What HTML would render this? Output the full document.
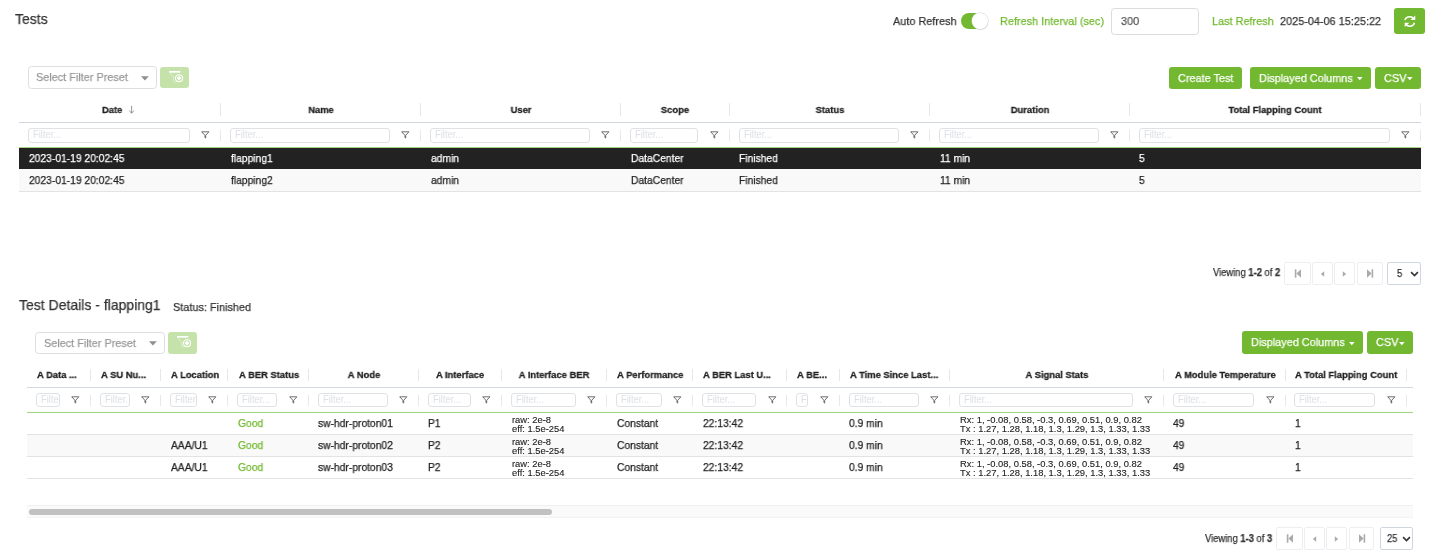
<!DOCTYPE html>
<html><head><meta charset="utf-8"><title>Tests</title>
<style>
html,body{margin:0;padding:0;background:#fff;}
body{width:1440px;height:559px;position:relative;overflow:hidden;font-family:"Liberation Sans",sans-serif;}
.t{position:absolute;white-space:nowrap;-webkit-text-stroke:0.25px currentColor;will-change:transform;}
.b{position:absolute;}
.fi{will-change:transform;border:1px solid #dfe1e4;border-radius:3px;box-sizing:border-box;background:#fff;overflow:hidden;color:#dde1e6;}
b{font-weight:bold;}
</style></head><body>
<div class="t" style="left:15.00px;top:11.63px;font-size:14.973px;line-height:14.973px;color:#333;font-weight:normal;transform:scaleX(0.935);transform-origin:0 0;">Tests</div>
<div class="t" style="left:893.00px;top:15.33px;font-size:11.658px;line-height:11.658px;color:#333;font-weight:normal;transform:scaleX(0.935);transform-origin:0 0;">Auto Refresh</div>
<div class="b" style="left:961.30px;top:12.60px;width:26.30px;height:16.60px;background:#72b830;border-radius:9px;"></div>
<div class="b" style="left:971.90px;top:12.80px;width:15.70px;height:16.40px;background:#fff;border-radius:50%;box-shadow:0 0 0 0.5px #d5d8d2, 0.3px 0.8px 1px rgba(0,0,0,.18);"></div>
<div class="t" style="left:1000.30px;top:15.33px;font-size:11.658px;line-height:11.658px;color:#72b830;font-weight:normal;transform:scaleX(0.935);transform-origin:0 0;">Refresh Interval (sec)</div>
<div class="b" style="left:1111.30px;top:8.20px;width:87.40px;height:26.40px;border:1.2px solid #dcdcdc;border-radius:3.5px;box-sizing:border-box;background:#fff;"></div>
<div class="t" style="left:1121.00px;top:15.43px;font-size:11.658px;line-height:11.658px;color:#555;font-weight:normal;transform:scaleX(0.935);transform-origin:0 0;">300</div>
<div class="t" style="left:1211.50px;top:15.33px;font-size:11.658px;line-height:11.658px;color:#72b830;font-weight:normal;transform:scaleX(0.935);transform-origin:0 0;">Last Refresh</div>
<div class="t" style="left:1280.00px;top:15.33px;font-size:11.658px;line-height:11.658px;color:#333;font-weight:normal;transform:scaleX(0.935);transform-origin:0 0;">2025-04-06 15:25:22</div>
<div class="b" style="left:1393.80px;top:8.00px;width:31.30px;height:26.20px;background:#72b830;border-radius:3px;"></div>
<svg class="b" style="left:1403.5px;top:14.6px" width="13" height="13" viewBox="0 0 13 13">
<path d="M0.9 5.1 C1.6 2.6 3.8 1.8 6 1.8 C7.6 1.8 8.8 2.5 9.6 3.7" fill="none" stroke="#fff" stroke-width="1.6"/>
<path d="M11.3 0.6 V5.1 H6.5 Z" fill="#fff"/>
<path d="M10.4 7.7 C9.7 10.2 7.6 11.2 5.6 11.2 C4.0 11.2 2.8 10.5 2.0 9.3" fill="none" stroke="#fff" stroke-width="1.6"/>
<path d="M0.7 12.1 V7.7 H5.4 Z" fill="#fff"/>
</svg>
<div class="b" style="left:27.50px;top:66.30px;width:129.10px;height:23.20px;border:1.2px solid #dedede;border-radius:3.5px;box-sizing:border-box;background:#fff;"></div>
<div class="t" style="left:36.30px;top:71.43px;font-size:11.658px;line-height:11.658px;color:#999;font-weight:normal;transform:scaleX(0.935);transform-origin:0 0;">Select Filter Preset</div>
<svg class="b" style="left:140.80px;top:76.00px" width="10" height="6" viewBox="0 0 10 6"><path d="M0 0.3 H7.8 L3.9 4.6 Z" fill="#8f8f8f"/></svg>
<div class="b" style="left:160.00px;top:66.80px;width:28.80px;height:21.70px;background:#c4e2a9;border-radius:3px;"></div>
<svg class="b" style="left:168.80px;top:71.30px" width="14" height="14" viewBox="0 0 14 14">
<rect x="0" y="0" width="11.3" height="1.7" fill="#fff"/>
<path d="M1.2 2.3 L4.6 6.6 V9.6 Q4.6 11.3 6.6 11.3" fill="none" stroke="#fff" stroke-width="1" opacity="0.45"/>
<circle cx="10" cy="7.2" r="3.5" fill="none" stroke="#fff" stroke-width="1.1"/>
<path d="M10 5.2 V9.2 M8.0 7.2 H12.0" stroke="#fff" stroke-width="1.7"/>
</svg>
<div class="b" style="left:1168.70px;top:66.80px;width:73.30px;height:21.80px;background:#72b830;border-radius:3px;"></div>
<div class="t" style="left:1177.90px;top:71.53px;font-size:11.658px;line-height:11.658px;color:#fff;font-weight:normal;transform:scaleX(0.935);transform-origin:0 0;">Create Test</div>
<div class="b" style="left:1250.00px;top:66.80px;width:121.00px;height:21.80px;background:#72b830;border-radius:3px;"></div>
<div class="t" style="left:1259.20px;top:71.53px;font-size:11.658px;line-height:11.658px;color:#fff;font-weight:normal;transform:scaleX(0.935);transform-origin:0 0;">Displayed Columns</div>
<svg class="b" style="left:1356.50px;top:76.90px" width="7" height="5" viewBox="0 0 7 5"><path d="M0 0 H5.6 L2.8 3.3 Z" fill="#fff"/></svg>
<div class="b" style="left:1374.90px;top:66.80px;width:46.10px;height:21.80px;background:#72b830;border-radius:3px;"></div>
<div class="t" style="left:1383.60px;top:71.53px;font-size:11.658px;line-height:11.658px;color:#fff;font-weight:normal;transform:scaleX(0.935);transform-origin:0 0;">CSV</div>
<svg class="b" style="left:1406.60px;top:76.90px" width="7" height="5" viewBox="0 0 7 5"><path d="M0 0 H5.6 L2.8 3.3 Z" fill="#fff"/></svg>
<div class="b" style="left:19.00px;top:148.00px;width:1402.00px;height:20.80px;background:#222;"></div>
<div class="b" style="left:19.00px;top:168.80px;width:1402.00px;height:23.20px;background:#f9f9f9;border-bottom:1px solid #e3e3e3;box-sizing:border-box;"></div>
<div class="b" style="left:19.00px;top:122.00px;width:1402.00px;height:1.00px;background:#d3d8de;"></div>
<div class="b" style="left:220.30px;top:103.00px;width:1.00px;height:12.60px;background:#e6e8eb;"></div>
<div class="b" style="left:220.30px;top:130.00px;width:1.00px;height:10.60px;background:#e6e8eb;"></div>
<div class="t" style="left:102.30px;top:104.71px;font-size:9.792px;line-height:9.792px;color:#222;font-weight:bold;transform:scaleX(0.96);transform-origin:0 0;-webkit-text-stroke:0.28px currentColor;">Date</div>
<svg class="b" style="left:128px;top:105px" width="8" height="10" viewBox="0 0 8 10"><path d="M3.6 0.8 V8.2 M1.3 5.6 L3.6 8.2 L5.9 5.6" fill="none" stroke="#8a8a8a" stroke-width="0.9"/></svg>
<div class="b fi" style="left:28.20px;top:128.10px;width:161.60px;height:14.50px;"><span style="position:absolute;left:3.6px;top:1.4px;font-size:10.05px;line-height:10.05px;transform:scaleX(0.935);transform-origin:0 0;">Filter...</span></div>
<svg class="b" style="left:201.40px;top:131.45px" width="9" height="8" viewBox="0 0 9 8">
<path d="M0.7 0.8 H7.9 L4.7 4.3 V7.1 L3.9 6.5 V4.3 Z" fill="none" stroke="#555" stroke-width="0.85" stroke-linejoin="round"/>
</svg>
<div class="b" style="left:420.30px;top:103.00px;width:1.00px;height:12.60px;background:#e6e8eb;"></div>
<div class="b" style="left:420.30px;top:130.00px;width:1.00px;height:10.60px;background:#e6e8eb;"></div>
<div class="t" style="left:21.00px;width:600px;text-align:center;top:104.71px;font-size:9.792px;line-height:9.792px;color:#222;font-weight:bold;transform:scaleX(0.96);transform-origin:50% 0;-webkit-text-stroke:0.28px currentColor;">Name</div>
<div class="b fi" style="left:230.20px;top:128.10px;width:159.60px;height:14.50px;"><span style="position:absolute;left:3.6px;top:1.4px;font-size:10.05px;line-height:10.05px;transform:scaleX(0.935);transform-origin:0 0;">Filter...</span></div>
<svg class="b" style="left:401.40px;top:131.45px" width="9" height="8" viewBox="0 0 9 8">
<path d="M0.7 0.8 H7.9 L4.7 4.3 V7.1 L3.9 6.5 V4.3 Z" fill="none" stroke="#555" stroke-width="0.85" stroke-linejoin="round"/>
</svg>
<div class="b" style="left:620.30px;top:103.00px;width:1.00px;height:12.60px;background:#e6e8eb;"></div>
<div class="b" style="left:620.30px;top:130.00px;width:1.00px;height:10.60px;background:#e6e8eb;"></div>
<div class="t" style="left:221.00px;width:600px;text-align:center;top:104.71px;font-size:9.792px;line-height:9.792px;color:#222;font-weight:bold;transform:scaleX(0.96);transform-origin:50% 0;-webkit-text-stroke:0.28px currentColor;">User</div>
<div class="b fi" style="left:430.20px;top:128.10px;width:159.60px;height:14.50px;"><span style="position:absolute;left:3.6px;top:1.4px;font-size:10.05px;line-height:10.05px;transform:scaleX(0.935);transform-origin:0 0;">Filter...</span></div>
<svg class="b" style="left:601.40px;top:131.45px" width="9" height="8" viewBox="0 0 9 8">
<path d="M0.7 0.8 H7.9 L4.7 4.3 V7.1 L3.9 6.5 V4.3 Z" fill="none" stroke="#555" stroke-width="0.85" stroke-linejoin="round"/>
</svg>
<div class="b" style="left:728.80px;top:103.00px;width:1.00px;height:12.60px;background:#e6e8eb;"></div>
<div class="b" style="left:728.80px;top:130.00px;width:1.00px;height:10.60px;background:#e6e8eb;"></div>
<div class="t" style="left:375.25px;width:600px;text-align:center;top:104.71px;font-size:9.792px;line-height:9.792px;color:#222;font-weight:bold;transform:scaleX(0.96);transform-origin:50% 0;-webkit-text-stroke:0.28px currentColor;">Scope</div>
<div class="b fi" style="left:630.20px;top:128.10px;width:68.10px;height:14.50px;"><span style="position:absolute;left:3.6px;top:1.4px;font-size:10.05px;line-height:10.05px;transform:scaleX(0.935);transform-origin:0 0;">Filter...</span></div>
<svg class="b" style="left:709.90px;top:131.45px" width="9" height="8" viewBox="0 0 9 8">
<path d="M0.7 0.8 H7.9 L4.7 4.3 V7.1 L3.9 6.5 V4.3 Z" fill="none" stroke="#555" stroke-width="0.85" stroke-linejoin="round"/>
</svg>
<div class="b" style="left:928.90px;top:103.00px;width:1.00px;height:12.60px;background:#e6e8eb;"></div>
<div class="b" style="left:928.90px;top:130.00px;width:1.00px;height:10.60px;background:#e6e8eb;"></div>
<div class="t" style="left:529.55px;width:600px;text-align:center;top:104.71px;font-size:9.792px;line-height:9.792px;color:#222;font-weight:bold;transform:scaleX(0.96);transform-origin:50% 0;-webkit-text-stroke:0.28px currentColor;">Status</div>
<div class="b fi" style="left:738.70px;top:128.10px;width:159.70px;height:14.50px;"><span style="position:absolute;left:3.6px;top:1.4px;font-size:10.05px;line-height:10.05px;transform:scaleX(0.935);transform-origin:0 0;">Filter...</span></div>
<svg class="b" style="left:910.00px;top:131.45px" width="9" height="8" viewBox="0 0 9 8">
<path d="M0.7 0.8 H7.9 L4.7 4.3 V7.1 L3.9 6.5 V4.3 Z" fill="none" stroke="#555" stroke-width="0.85" stroke-linejoin="round"/>
</svg>
<div class="b" style="left:1128.80px;top:103.00px;width:1.00px;height:12.60px;background:#e6e8eb;"></div>
<div class="b" style="left:1128.80px;top:130.00px;width:1.00px;height:10.60px;background:#e6e8eb;"></div>
<div class="t" style="left:729.55px;width:600px;text-align:center;top:104.71px;font-size:9.792px;line-height:9.792px;color:#222;font-weight:bold;transform:scaleX(0.96);transform-origin:50% 0;-webkit-text-stroke:0.28px currentColor;">Duration</div>
<div class="b fi" style="left:938.80px;top:128.10px;width:159.50px;height:14.50px;"><span style="position:absolute;left:3.6px;top:1.4px;font-size:10.05px;line-height:10.05px;transform:scaleX(0.935);transform-origin:0 0;">Filter...</span></div>
<svg class="b" style="left:1109.90px;top:131.45px" width="9" height="8" viewBox="0 0 9 8">
<path d="M0.7 0.8 H7.9 L4.7 4.3 V7.1 L3.9 6.5 V4.3 Z" fill="none" stroke="#555" stroke-width="0.85" stroke-linejoin="round"/>
</svg>
<div class="b" style="left:1419.80px;top:103.00px;width:1.00px;height:12.60px;background:#e6e8eb;"></div>
<div class="b" style="left:1419.80px;top:130.00px;width:1.00px;height:10.60px;background:#e6e8eb;"></div>
<div class="t" style="left:975.00px;width:600px;text-align:center;top:104.71px;font-size:9.792px;line-height:9.792px;color:#222;font-weight:bold;transform:scaleX(0.96);transform-origin:50% 0;-webkit-text-stroke:0.28px currentColor;">Total Flapping Count</div>
<div class="b fi" style="left:1138.70px;top:128.10px;width:250.60px;height:14.50px;"><span style="position:absolute;left:3.6px;top:1.4px;font-size:10.05px;line-height:10.05px;transform:scaleX(0.935);transform-origin:0 0;">Filter...</span></div>
<svg class="b" style="left:1400.90px;top:131.45px" width="9" height="8" viewBox="0 0 9 8">
<path d="M0.7 0.8 H7.9 L4.7 4.3 V7.1 L3.9 6.5 V4.3 Z" fill="none" stroke="#555" stroke-width="0.85" stroke-linejoin="round"/>
</svg>
<div class="b" style="left:19.00px;top:147.10px;width:1402.00px;height:1.00px;background:#a3d47e;"></div>
<div class="t" style="left:28.90px;top:153.27px;font-size:11.016px;line-height:11.016px;color:#fff;font-weight:normal;transform:scaleX(0.935);transform-origin:0 0;">2023-01-19 20:02:45</div>
<div class="t" style="left:28.90px;top:175.27px;font-size:11.016px;line-height:11.016px;color:#222;font-weight:normal;transform:scaleX(0.935);transform-origin:0 0;">2023-01-19 20:02:45</div>
<div class="t" style="left:230.90px;top:153.27px;font-size:11.016px;line-height:11.016px;color:#fff;font-weight:normal;transform:scaleX(0.935);transform-origin:0 0;">flapping1</div>
<div class="t" style="left:230.90px;top:175.27px;font-size:11.016px;line-height:11.016px;color:#222;font-weight:normal;transform:scaleX(0.935);transform-origin:0 0;">flapping2</div>
<div class="t" style="left:430.90px;top:153.27px;font-size:11.016px;line-height:11.016px;color:#fff;font-weight:normal;transform:scaleX(0.935);transform-origin:0 0;">admin</div>
<div class="t" style="left:430.90px;top:175.27px;font-size:11.016px;line-height:11.016px;color:#222;font-weight:normal;transform:scaleX(0.935);transform-origin:0 0;">admin</div>
<div class="t" style="left:630.90px;top:153.27px;font-size:11.016px;line-height:11.016px;color:#fff;font-weight:normal;transform:scaleX(0.935);transform-origin:0 0;">DataCenter</div>
<div class="t" style="left:630.90px;top:175.27px;font-size:11.016px;line-height:11.016px;color:#222;font-weight:normal;transform:scaleX(0.935);transform-origin:0 0;">DataCenter</div>
<div class="t" style="left:739.40px;top:153.27px;font-size:11.016px;line-height:11.016px;color:#fff;font-weight:normal;transform:scaleX(0.935);transform-origin:0 0;">Finished</div>
<div class="t" style="left:739.40px;top:175.27px;font-size:11.016px;line-height:11.016px;color:#222;font-weight:normal;transform:scaleX(0.935);transform-origin:0 0;">Finished</div>
<div class="t" style="left:939.50px;top:153.27px;font-size:11.016px;line-height:11.016px;color:#fff;font-weight:normal;transform:scaleX(0.935);transform-origin:0 0;">11 min</div>
<div class="t" style="left:939.50px;top:175.27px;font-size:11.016px;line-height:11.016px;color:#222;font-weight:normal;transform:scaleX(0.935);transform-origin:0 0;">11 min</div>
<div class="t" style="left:1139.40px;top:153.27px;font-size:11.016px;line-height:11.016px;color:#fff;font-weight:normal;transform:scaleX(0.935);transform-origin:0 0;">5</div>
<div class="t" style="left:1139.40px;top:175.27px;font-size:11.016px;line-height:11.016px;color:#222;font-weight:normal;transform:scaleX(0.935);transform-origin:0 0;">5</div>
<div class="t" style="left:1212.90px;top:268.49px;font-size:10.053px;line-height:10.053px;color:#333;font-weight:normal;transform:scaleX(0.935);transform-origin:0 0;">Viewing <b>1-2</b> of <b>2</b></div>
<div class="b" style="left:1284.40px;top:262.30px;width:26.30px;height:22.90px;border:1px solid #eceef2;border-radius:2px;box-sizing:border-box;background:#fff;"></div>
<svg class="b" style="left:1293.55px;top:269.25px" width="8" height="9" viewBox="0 0 8 9"><rect x="0.8" y="0.3" width="1.6" height="8.4" fill="#aaa"/><path d="M7 0.3 V8.7 L2.4 4.5 Z" fill="#aaa"/></svg>
<div class="b" style="left:1311.80px;top:262.30px;width:21.00px;height:22.90px;border:1px solid #eceef2;border-radius:2px;box-sizing:border-box;background:#fff;"></div>
<svg class="b" style="left:1319.80px;top:270.75px" width="5" height="6" viewBox="0 0 5 6"><path d="M4.2 0.2 V5.8 L0.8 3 Z" fill="#aaa"/></svg>
<div class="b" style="left:1333.90px;top:262.30px;width:21.30px;height:22.90px;border:1px solid #eceef2;border-radius:2px;box-sizing:border-box;background:#fff;"></div>
<svg class="b" style="left:1342.05px;top:270.75px" width="5" height="6" viewBox="0 0 5 6"><path d="M0.8 0.2 V5.8 L4.2 3 Z" fill="#aaa"/></svg>
<div class="b" style="left:1356.80px;top:262.30px;width:25.80px;height:22.90px;border:1px solid #eceef2;border-radius:2px;box-sizing:border-box;background:#fff;"></div>
<svg class="b" style="left:1365.70px;top:269.25px" width="8" height="9" viewBox="0 0 8 9"><rect x="5.6" y="0.3" width="1.6" height="8.4" fill="#aaa"/><path d="M1 0.3 V8.7 L5.6 4.5 Z" fill="#aaa"/></svg>
<div class="b" style="left:1387.30px;top:262.30px;width:33.50px;height:22.90px;border:1px solid #cfd6e0;border-radius:2px;box-sizing:border-box;background:#fff;"></div>
<div class="t" style="left:1397.20px;top:268.94px;font-size:10.053px;line-height:10.053px;color:#333;font-weight:normal;transform:scaleX(0.935);transform-origin:0 0;">5</div>
<svg class="b" style="left:1409.80px;top:270.75px" width="9" height="6" viewBox="0 0 9 6"><path d="M1.1 1.1 L4.5 4.5 L7.9 1.1" fill="none" stroke="#333" stroke-width="1.6"/></svg>
<div class="t" style="left:19.40px;top:298.13px;font-size:14.973px;line-height:14.973px;color:#333;font-weight:normal;transform:scaleX(0.935);transform-origin:0 0;">Test Details - flapping1</div>
<div class="t" style="left:173.40px;top:300.93px;font-size:11.658px;line-height:11.658px;color:#333;font-weight:normal;transform:scaleX(0.935);transform-origin:0 0;">Status: Finished</div>
<div class="b" style="left:35.30px;top:331.50px;width:129.40px;height:22.60px;border:1.2px solid #dedede;border-radius:3.5px;box-sizing:border-box;background:#fff;"></div>
<div class="t" style="left:44.10px;top:336.63px;font-size:11.658px;line-height:11.658px;color:#999;font-weight:normal;transform:scaleX(0.935);transform-origin:0 0;">Select Filter Preset</div>
<svg class="b" style="left:148.90px;top:341.20px" width="10" height="6" viewBox="0 0 10 6"><path d="M0 0.3 H7.8 L3.9 4.6 Z" fill="#8f8f8f"/></svg>
<div class="b" style="left:168.00px;top:331.90px;width:28.90px;height:21.70px;background:#c4e2a9;border-radius:3px;"></div>
<svg class="b" style="left:176.80px;top:336.40px" width="14" height="14" viewBox="0 0 14 14">
<rect x="0" y="0" width="11.3" height="1.7" fill="#fff"/>
<path d="M1.2 2.3 L4.6 6.6 V9.6 Q4.6 11.3 6.6 11.3" fill="none" stroke="#fff" stroke-width="1" opacity="0.45"/>
<circle cx="10" cy="7.2" r="3.5" fill="none" stroke="#fff" stroke-width="1.1"/>
<path d="M10 5.2 V9.2 M8.0 7.2 H12.0" stroke="#fff" stroke-width="1.7"/>
</svg>
<div class="b" style="left:1242.30px;top:331.30px;width:120.60px;height:22.30px;background:#72b830;border-radius:3px;"></div>
<div class="t" style="left:1251.10px;top:336.03px;font-size:11.658px;line-height:11.658px;color:#fff;font-weight:normal;transform:scaleX(0.935);transform-origin:0 0;">Displayed Columns</div>
<svg class="b" style="left:1348.80px;top:341.80px" width="7" height="5" viewBox="0 0 7 5"><path d="M0 0 H5.6 L2.8 3.3 Z" fill="#fff"/></svg>
<div class="b" style="left:1367.20px;top:331.30px;width:45.90px;height:22.30px;background:#72b830;border-radius:3px;"></div>
<div class="t" style="left:1376.20px;top:336.03px;font-size:11.658px;line-height:11.658px;color:#fff;font-weight:normal;transform:scaleX(0.935);transform-origin:0 0;">CSV</div>
<svg class="b" style="left:1398.80px;top:341.80px" width="7" height="5" viewBox="0 0 7 5"><path d="M0 0 H5.6 L2.8 3.3 Z" fill="#fff"/></svg>
<div class="b" style="left:26.60px;top:413.00px;width:1386.30px;height:22.00px;border-bottom:1px solid #e3e3e3;box-sizing:border-box;"></div>
<div class="b" style="left:26.60px;top:435.00px;width:1386.30px;height:22.00px;background:#f9f9f9;border-bottom:1px solid #e3e3e3;box-sizing:border-box;"></div>
<div class="b" style="left:26.60px;top:457.00px;width:1386.30px;height:22.00px;border-bottom:1px solid #e3e3e3;box-sizing:border-box;"></div>
<div class="b" style="left:0;top:0;width:1412.9px;height:559px;overflow:hidden;">
<div class="b" style="left:26.60px;top:387.00px;width:1386.30px;height:1.00px;background:#d3d8de;"></div>
<div class="b" style="left:89.90px;top:368.50px;width:1.00px;height:12.50px;background:#e6e8eb;"></div>
<div class="b" style="left:89.90px;top:395.00px;width:1.00px;height:10.50px;background:#e6e8eb;"></div>
<div class="t" style="left:36.50px;top:369.91px;font-size:9.792px;line-height:9.792px;color:#222;font-weight:bold;transform:scaleX(0.96);transform-origin:0 0;-webkit-text-stroke:0.28px currentColor;">A Data ...</div>
<div class="b fi" style="left:35.80px;top:393.30px;width:23.60px;height:14.10px;"><span style="position:absolute;left:3.6px;top:1.4px;font-size:10.05px;line-height:10.05px;transform:scaleX(0.935);transform-origin:0 0;">Filter...</span></div>
<svg class="b" style="left:71.00px;top:396.45px" width="9" height="8" viewBox="0 0 9 8">
<path d="M0.7 0.8 H7.9 L4.7 4.3 V7.1 L3.9 6.5 V4.3 Z" fill="none" stroke="#555" stroke-width="0.85" stroke-linejoin="round"/>
</svg>
<div class="b" style="left:159.90px;top:368.50px;width:1.00px;height:12.50px;background:#e6e8eb;"></div>
<div class="b" style="left:159.90px;top:395.00px;width:1.00px;height:10.50px;background:#e6e8eb;"></div>
<div class="t" style="left:100.70px;top:369.91px;font-size:9.792px;line-height:9.792px;color:#222;font-weight:bold;transform:scaleX(0.96);transform-origin:0 0;-webkit-text-stroke:0.28px currentColor;">A SU Nu...</div>
<div class="b fi" style="left:99.80px;top:393.30px;width:29.60px;height:14.10px;"><span style="position:absolute;left:3.6px;top:1.4px;font-size:10.05px;line-height:10.05px;transform:scaleX(0.935);transform-origin:0 0;">Filter...</span></div>
<svg class="b" style="left:141.00px;top:396.45px" width="9" height="8" viewBox="0 0 9 8">
<path d="M0.7 0.8 H7.9 L4.7 4.3 V7.1 L3.9 6.5 V4.3 Z" fill="none" stroke="#555" stroke-width="0.85" stroke-linejoin="round"/>
</svg>
<div class="b" style="left:227.20px;top:368.50px;width:1.00px;height:12.50px;background:#e6e8eb;"></div>
<div class="b" style="left:227.20px;top:395.00px;width:1.00px;height:10.50px;background:#e6e8eb;"></div>
<div class="t" style="left:170.80px;top:369.91px;font-size:9.792px;line-height:9.792px;color:#222;font-weight:bold;transform:scaleX(0.96);transform-origin:0 0;-webkit-text-stroke:0.28px currentColor;">A Location</div>
<div class="b fi" style="left:169.80px;top:393.30px;width:26.90px;height:14.10px;"><span style="position:absolute;left:3.6px;top:1.4px;font-size:10.05px;line-height:10.05px;transform:scaleX(0.935);transform-origin:0 0;">Filter...</span></div>
<svg class="b" style="left:208.30px;top:396.45px" width="9" height="8" viewBox="0 0 9 8">
<path d="M0.7 0.8 H7.9 L4.7 4.3 V7.1 L3.9 6.5 V4.3 Z" fill="none" stroke="#555" stroke-width="0.85" stroke-linejoin="round"/>
</svg>
<div class="b" style="left:307.80px;top:368.50px;width:1.00px;height:12.50px;background:#e6e8eb;"></div>
<div class="b" style="left:307.80px;top:395.00px;width:1.00px;height:10.50px;background:#e6e8eb;"></div>
<div class="t" style="left:238.75px;top:369.91px;font-size:9.792px;line-height:9.792px;color:#222;font-weight:bold;transform:scaleX(0.96);transform-origin:0 0;-webkit-text-stroke:0.28px currentColor;">A BER Status</div>
<div class="b fi" style="left:237.10px;top:393.30px;width:40.20px;height:14.10px;"><span style="position:absolute;left:3.6px;top:1.4px;font-size:10.05px;line-height:10.05px;transform:scaleX(0.935);transform-origin:0 0;">Filter...</span></div>
<svg class="b" style="left:288.90px;top:396.45px" width="9" height="8" viewBox="0 0 9 8">
<path d="M0.7 0.8 H7.9 L4.7 4.3 V7.1 L3.9 6.5 V4.3 Z" fill="none" stroke="#555" stroke-width="0.85" stroke-linejoin="round"/>
</svg>
<div class="b" style="left:417.80px;top:368.50px;width:1.00px;height:12.50px;background:#e6e8eb;"></div>
<div class="b" style="left:417.80px;top:395.00px;width:1.00px;height:10.50px;background:#e6e8eb;"></div>
<div class="t" style="left:63.50px;width:600px;text-align:center;top:369.91px;font-size:9.792px;line-height:9.792px;color:#222;font-weight:bold;transform:scaleX(0.96);transform-origin:50% 0;-webkit-text-stroke:0.28px currentColor;">A Node</div>
<div class="b fi" style="left:317.70px;top:393.30px;width:69.60px;height:14.10px;"><span style="position:absolute;left:3.6px;top:1.4px;font-size:10.05px;line-height:10.05px;transform:scaleX(0.935);transform-origin:0 0;">Filter...</span></div>
<svg class="b" style="left:398.90px;top:396.45px" width="9" height="8" viewBox="0 0 9 8">
<path d="M0.7 0.8 H7.9 L4.7 4.3 V7.1 L3.9 6.5 V4.3 Z" fill="none" stroke="#555" stroke-width="0.85" stroke-linejoin="round"/>
</svg>
<div class="b" style="left:500.90px;top:368.50px;width:1.00px;height:12.50px;background:#e6e8eb;"></div>
<div class="b" style="left:500.90px;top:395.00px;width:1.00px;height:10.50px;background:#e6e8eb;"></div>
<div class="t" style="left:160.05px;width:600px;text-align:center;top:369.91px;font-size:9.792px;line-height:9.792px;color:#222;font-weight:bold;transform:scaleX(0.96);transform-origin:50% 0;-webkit-text-stroke:0.28px currentColor;">A Interface</div>
<div class="b fi" style="left:427.70px;top:393.30px;width:42.70px;height:14.10px;"><span style="position:absolute;left:3.6px;top:1.4px;font-size:10.05px;line-height:10.05px;transform:scaleX(0.935);transform-origin:0 0;">Filter...</span></div>
<svg class="b" style="left:482.00px;top:396.45px" width="9" height="8" viewBox="0 0 9 8">
<path d="M0.7 0.8 H7.9 L4.7 4.3 V7.1 L3.9 6.5 V4.3 Z" fill="none" stroke="#555" stroke-width="0.85" stroke-linejoin="round"/>
</svg>
<div class="b" style="left:606.00px;top:368.50px;width:1.00px;height:12.50px;background:#e6e8eb;"></div>
<div class="b" style="left:606.00px;top:395.00px;width:1.00px;height:10.50px;background:#e6e8eb;"></div>
<div class="t" style="left:254.15px;width:600px;text-align:center;top:369.91px;font-size:9.792px;line-height:9.792px;color:#222;font-weight:bold;transform:scaleX(0.96);transform-origin:50% 0;-webkit-text-stroke:0.28px currentColor;">A Interface BER</div>
<div class="b fi" style="left:510.80px;top:393.30px;width:64.70px;height:14.10px;"><span style="position:absolute;left:3.6px;top:1.4px;font-size:10.05px;line-height:10.05px;transform:scaleX(0.935);transform-origin:0 0;">Filter...</span></div>
<svg class="b" style="left:587.10px;top:396.45px" width="9" height="8" viewBox="0 0 9 8">
<path d="M0.7 0.8 H7.9 L4.7 4.3 V7.1 L3.9 6.5 V4.3 Z" fill="none" stroke="#555" stroke-width="0.85" stroke-linejoin="round"/>
</svg>
<div class="b" style="left:692.00px;top:368.50px;width:1.00px;height:12.50px;background:#e6e8eb;"></div>
<div class="b" style="left:692.00px;top:395.00px;width:1.00px;height:10.50px;background:#e6e8eb;"></div>
<div class="t" style="left:617.00px;top:369.91px;font-size:9.792px;line-height:9.792px;color:#222;font-weight:bold;transform:scaleX(0.96);transform-origin:0 0;-webkit-text-stroke:0.28px currentColor;">A Performance</div>
<div class="b fi" style="left:615.90px;top:393.30px;width:45.60px;height:14.10px;"><span style="position:absolute;left:3.6px;top:1.4px;font-size:10.05px;line-height:10.05px;transform:scaleX(0.935);transform-origin:0 0;">Filter...</span></div>
<svg class="b" style="left:673.10px;top:396.45px" width="9" height="8" viewBox="0 0 9 8">
<path d="M0.7 0.8 H7.9 L4.7 4.3 V7.1 L3.9 6.5 V4.3 Z" fill="none" stroke="#555" stroke-width="0.85" stroke-linejoin="round"/>
</svg>
<div class="b" style="left:786.40px;top:368.50px;width:1.00px;height:12.50px;background:#e6e8eb;"></div>
<div class="b" style="left:786.40px;top:395.00px;width:1.00px;height:10.50px;background:#e6e8eb;"></div>
<div class="t" style="left:702.90px;top:369.91px;font-size:9.792px;line-height:9.792px;color:#222;font-weight:bold;transform:scaleX(0.96);transform-origin:0 0;-webkit-text-stroke:0.28px currentColor;">A BER Last U...</div>
<div class="b fi" style="left:701.90px;top:393.30px;width:54.00px;height:14.10px;"><span style="position:absolute;left:3.6px;top:1.4px;font-size:10.05px;line-height:10.05px;transform:scaleX(0.935);transform-origin:0 0;">Filter...</span></div>
<svg class="b" style="left:767.50px;top:396.45px" width="9" height="8" viewBox="0 0 9 8">
<path d="M0.7 0.8 H7.9 L4.7 4.3 V7.1 L3.9 6.5 V4.3 Z" fill="none" stroke="#555" stroke-width="0.85" stroke-linejoin="round"/>
</svg>
<div class="b" style="left:838.70px;top:368.50px;width:1.00px;height:12.50px;background:#e6e8eb;"></div>
<div class="b" style="left:838.70px;top:395.00px;width:1.00px;height:10.50px;background:#e6e8eb;"></div>
<div class="t" style="left:797.00px;top:369.91px;font-size:9.792px;line-height:9.792px;color:#222;font-weight:bold;transform:scaleX(0.96);transform-origin:0 0;-webkit-text-stroke:0.28px currentColor;">A BE...</div>
<div class="b fi" style="left:796.30px;top:393.30px;width:11.90px;height:14.10px;"><span style="position:absolute;left:3.6px;top:1.4px;font-size:10.05px;line-height:10.05px;transform:scaleX(0.935);transform-origin:0 0;">Filter...</span></div>
<svg class="b" style="left:819.80px;top:396.45px" width="9" height="8" viewBox="0 0 9 8">
<path d="M0.7 0.8 H7.9 L4.7 4.3 V7.1 L3.9 6.5 V4.3 Z" fill="none" stroke="#555" stroke-width="0.85" stroke-linejoin="round"/>
</svg>
<div class="b" style="left:948.90px;top:368.50px;width:1.00px;height:12.50px;background:#e6e8eb;"></div>
<div class="b" style="left:948.90px;top:395.00px;width:1.00px;height:10.50px;background:#e6e8eb;"></div>
<div class="t" style="left:849.60px;top:369.91px;font-size:9.792px;line-height:9.792px;color:#222;font-weight:bold;transform:scaleX(0.96);transform-origin:0 0;-webkit-text-stroke:0.28px currentColor;">A Time Since Last...</div>
<div class="b fi" style="left:848.60px;top:393.30px;width:69.80px;height:14.10px;"><span style="position:absolute;left:3.6px;top:1.4px;font-size:10.05px;line-height:10.05px;transform:scaleX(0.935);transform-origin:0 0;">Filter...</span></div>
<svg class="b" style="left:930.00px;top:396.45px" width="9" height="8" viewBox="0 0 9 8">
<path d="M0.7 0.8 H7.9 L4.7 4.3 V7.1 L3.9 6.5 V4.3 Z" fill="none" stroke="#555" stroke-width="0.85" stroke-linejoin="round"/>
</svg>
<div class="b" style="left:1162.80px;top:368.50px;width:1.00px;height:12.50px;background:#e6e8eb;"></div>
<div class="b" style="left:1162.80px;top:395.00px;width:1.00px;height:10.50px;background:#e6e8eb;"></div>
<div class="t" style="left:756.55px;width:600px;text-align:center;top:369.91px;font-size:9.792px;line-height:9.792px;color:#222;font-weight:bold;transform:scaleX(0.96);transform-origin:50% 0;-webkit-text-stroke:0.28px currentColor;">A Signal Stats</div>
<div class="b fi" style="left:958.80px;top:393.30px;width:173.50px;height:14.10px;"><span style="position:absolute;left:3.6px;top:1.4px;font-size:10.05px;line-height:10.05px;transform:scaleX(0.935);transform-origin:0 0;">Filter...</span></div>
<svg class="b" style="left:1143.90px;top:396.45px" width="9" height="8" viewBox="0 0 9 8">
<path d="M0.7 0.8 H7.9 L4.7 4.3 V7.1 L3.9 6.5 V4.3 Z" fill="none" stroke="#555" stroke-width="0.85" stroke-linejoin="round"/>
</svg>
<div class="b" style="left:1284.50px;top:368.50px;width:1.00px;height:12.50px;background:#e6e8eb;"></div>
<div class="b" style="left:1284.50px;top:395.00px;width:1.00px;height:10.50px;background:#e6e8eb;"></div>
<div class="t" style="left:1174.80px;top:369.91px;font-size:9.792px;line-height:9.792px;color:#222;font-weight:bold;transform:scaleX(0.96);transform-origin:0 0;-webkit-text-stroke:0.28px currentColor;">A Module Temperature</div>
<div class="b fi" style="left:1172.70px;top:393.30px;width:81.30px;height:14.10px;"><span style="position:absolute;left:3.6px;top:1.4px;font-size:10.05px;line-height:10.05px;transform:scaleX(0.935);transform-origin:0 0;">Filter...</span></div>
<svg class="b" style="left:1265.60px;top:396.45px" width="9" height="8" viewBox="0 0 9 8">
<path d="M0.7 0.8 H7.9 L4.7 4.3 V7.1 L3.9 6.5 V4.3 Z" fill="none" stroke="#555" stroke-width="0.85" stroke-linejoin="round"/>
</svg>
<div class="b" style="left:1406.00px;top:368.50px;width:1.00px;height:12.50px;background:#e6e8eb;"></div>
<div class="b" style="left:1406.00px;top:395.00px;width:1.00px;height:10.50px;background:#e6e8eb;"></div>
<div class="t" style="left:1295.20px;top:369.91px;font-size:9.792px;line-height:9.792px;color:#222;font-weight:bold;transform:scaleX(0.96);transform-origin:0 0;-webkit-text-stroke:0.28px currentColor;">A Total Flapping Count</div>
<div class="b fi" style="left:1294.40px;top:393.30px;width:81.10px;height:14.10px;"><span style="position:absolute;left:3.6px;top:1.4px;font-size:10.05px;line-height:10.05px;transform:scaleX(0.935);transform-origin:0 0;">Filter...</span></div>
<svg class="b" style="left:1387.10px;top:396.45px" width="9" height="8" viewBox="0 0 9 8">
<path d="M0.7 0.8 H7.9 L4.7 4.3 V7.1 L3.9 6.5 V4.3 Z" fill="none" stroke="#555" stroke-width="0.85" stroke-linejoin="round"/>
</svg>
<div class="b" style="left:26.60px;top:412.40px;width:1386.30px;height:1.00px;background:#a3d47e;"></div>
</div>
<div class="t" style="left:237.80px;top:417.87px;font-size:11.016px;line-height:11.016px;color:#72b830;font-weight:normal;transform:scaleX(0.935);transform-origin:0 0;">Good</div>
<div class="t" style="left:318.40px;top:417.87px;font-size:11.016px;line-height:11.016px;color:#222;font-weight:normal;transform:scaleX(0.935);transform-origin:0 0;">sw-hdr-proton01</div>
<div class="t" style="left:428.40px;top:417.87px;font-size:11.016px;line-height:11.016px;color:#222;font-weight:normal;transform:scaleX(0.935);transform-origin:0 0;">P1</div>
<div class="t" style="left:511.50px;top:414.94px;font-size:9.400px;line-height:9.400px;color:#222;font-weight:normal;transform:scaleX(1.0);transform-origin:0 0;-webkit-text-stroke:0.12px currentColor;">raw: 2e-8</div>
<div class="t" style="left:511.50px;top:423.94px;font-size:9.400px;line-height:9.400px;color:#222;font-weight:normal;transform:scaleX(1.0);transform-origin:0 0;-webkit-text-stroke:0.12px currentColor;">eff: 1.5e-254</div>
<div class="t" style="left:616.60px;top:417.87px;font-size:11.016px;line-height:11.016px;color:#222;font-weight:normal;transform:scaleX(0.935);transform-origin:0 0;">Constant</div>
<div class="t" style="left:702.60px;top:417.87px;font-size:11.016px;line-height:11.016px;color:#222;font-weight:normal;transform:scaleX(0.935);transform-origin:0 0;">22:13:42</div>
<div class="t" style="left:849.30px;top:417.87px;font-size:11.016px;line-height:11.016px;color:#222;font-weight:normal;transform:scaleX(0.935);transform-origin:0 0;">0.9 min</div>
<div class="t" style="left:959.50px;top:414.94px;font-size:9.400px;line-height:9.400px;color:#222;font-weight:normal;transform:scaleX(1.0);transform-origin:0 0;-webkit-text-stroke:0.12px currentColor;">Rx: 1, -0.08, 0.58, -0.3, 0.69, 0.51, 0.9, 0.82</div>
<div class="t" style="left:959.50px;top:423.94px;font-size:9.400px;line-height:9.400px;color:#222;font-weight:normal;transform:scaleX(1.0);transform-origin:0 0;-webkit-text-stroke:0.12px currentColor;">Tx : 1.27, 1.28, 1.18, 1.3, 1.29, 1.3, 1.33, 1.33</div>
<div class="t" style="left:1173.40px;top:417.87px;font-size:11.016px;line-height:11.016px;color:#222;font-weight:normal;transform:scaleX(0.935);transform-origin:0 0;">49</div>
<div class="t" style="left:1295.10px;top:417.87px;font-size:11.016px;line-height:11.016px;color:#222;font-weight:normal;transform:scaleX(0.935);transform-origin:0 0;">1</div>
<div class="t" style="left:170.50px;top:439.87px;font-size:11.016px;line-height:11.016px;color:#222;font-weight:normal;transform:scaleX(0.935);transform-origin:0 0;">AAA/U1</div>
<div class="t" style="left:237.80px;top:439.87px;font-size:11.016px;line-height:11.016px;color:#72b830;font-weight:normal;transform:scaleX(0.935);transform-origin:0 0;">Good</div>
<div class="t" style="left:318.40px;top:439.87px;font-size:11.016px;line-height:11.016px;color:#222;font-weight:normal;transform:scaleX(0.935);transform-origin:0 0;">sw-hdr-proton02</div>
<div class="t" style="left:428.40px;top:439.87px;font-size:11.016px;line-height:11.016px;color:#222;font-weight:normal;transform:scaleX(0.935);transform-origin:0 0;">P2</div>
<div class="t" style="left:511.50px;top:436.94px;font-size:9.400px;line-height:9.400px;color:#222;font-weight:normal;transform:scaleX(1.0);transform-origin:0 0;-webkit-text-stroke:0.12px currentColor;">raw: 2e-8</div>
<div class="t" style="left:511.50px;top:445.94px;font-size:9.400px;line-height:9.400px;color:#222;font-weight:normal;transform:scaleX(1.0);transform-origin:0 0;-webkit-text-stroke:0.12px currentColor;">eff: 1.5e-254</div>
<div class="t" style="left:616.60px;top:439.87px;font-size:11.016px;line-height:11.016px;color:#222;font-weight:normal;transform:scaleX(0.935);transform-origin:0 0;">Constant</div>
<div class="t" style="left:702.60px;top:439.87px;font-size:11.016px;line-height:11.016px;color:#222;font-weight:normal;transform:scaleX(0.935);transform-origin:0 0;">22:13:42</div>
<div class="t" style="left:849.30px;top:439.87px;font-size:11.016px;line-height:11.016px;color:#222;font-weight:normal;transform:scaleX(0.935);transform-origin:0 0;">0.9 min</div>
<div class="t" style="left:959.50px;top:436.94px;font-size:9.400px;line-height:9.400px;color:#222;font-weight:normal;transform:scaleX(1.0);transform-origin:0 0;-webkit-text-stroke:0.12px currentColor;">Rx: 1, -0.08, 0.58, -0.3, 0.69, 0.51, 0.9, 0.82</div>
<div class="t" style="left:959.50px;top:445.94px;font-size:9.400px;line-height:9.400px;color:#222;font-weight:normal;transform:scaleX(1.0);transform-origin:0 0;-webkit-text-stroke:0.12px currentColor;">Tx : 1.27, 1.28, 1.18, 1.3, 1.29, 1.3, 1.33, 1.33</div>
<div class="t" style="left:1173.40px;top:439.87px;font-size:11.016px;line-height:11.016px;color:#222;font-weight:normal;transform:scaleX(0.935);transform-origin:0 0;">49</div>
<div class="t" style="left:1295.10px;top:439.87px;font-size:11.016px;line-height:11.016px;color:#222;font-weight:normal;transform:scaleX(0.935);transform-origin:0 0;">1</div>
<div class="t" style="left:170.50px;top:462.27px;font-size:11.016px;line-height:11.016px;color:#222;font-weight:normal;transform:scaleX(0.935);transform-origin:0 0;">AAA/U1</div>
<div class="t" style="left:237.80px;top:462.27px;font-size:11.016px;line-height:11.016px;color:#72b830;font-weight:normal;transform:scaleX(0.935);transform-origin:0 0;">Good</div>
<div class="t" style="left:318.40px;top:462.27px;font-size:11.016px;line-height:11.016px;color:#222;font-weight:normal;transform:scaleX(0.935);transform-origin:0 0;">sw-hdr-proton03</div>
<div class="t" style="left:428.40px;top:462.27px;font-size:11.016px;line-height:11.016px;color:#222;font-weight:normal;transform:scaleX(0.935);transform-origin:0 0;">P2</div>
<div class="t" style="left:511.50px;top:458.74px;font-size:9.400px;line-height:9.400px;color:#222;font-weight:normal;transform:scaleX(1.0);transform-origin:0 0;-webkit-text-stroke:0.12px currentColor;">raw: 2e-8</div>
<div class="t" style="left:511.50px;top:467.74px;font-size:9.400px;line-height:9.400px;color:#222;font-weight:normal;transform:scaleX(1.0);transform-origin:0 0;-webkit-text-stroke:0.12px currentColor;">eff: 1.5e-254</div>
<div class="t" style="left:616.60px;top:462.27px;font-size:11.016px;line-height:11.016px;color:#222;font-weight:normal;transform:scaleX(0.935);transform-origin:0 0;">Constant</div>
<div class="t" style="left:702.60px;top:462.27px;font-size:11.016px;line-height:11.016px;color:#222;font-weight:normal;transform:scaleX(0.935);transform-origin:0 0;">22:13:42</div>
<div class="t" style="left:849.30px;top:462.27px;font-size:11.016px;line-height:11.016px;color:#222;font-weight:normal;transform:scaleX(0.935);transform-origin:0 0;">0.9 min</div>
<div class="t" style="left:959.50px;top:458.74px;font-size:9.400px;line-height:9.400px;color:#222;font-weight:normal;transform:scaleX(1.0);transform-origin:0 0;-webkit-text-stroke:0.12px currentColor;">Rx: 1, -0.08, 0.58, -0.3, 0.69, 0.51, 0.9, 0.82</div>
<div class="t" style="left:959.50px;top:467.74px;font-size:9.400px;line-height:9.400px;color:#222;font-weight:normal;transform:scaleX(1.0);transform-origin:0 0;-webkit-text-stroke:0.12px currentColor;">Tx : 1.27, 1.28, 1.18, 1.3, 1.29, 1.3, 1.33, 1.33</div>
<div class="t" style="left:1173.40px;top:462.27px;font-size:11.016px;line-height:11.016px;color:#222;font-weight:normal;transform:scaleX(0.935);transform-origin:0 0;">49</div>
<div class="t" style="left:1295.10px;top:462.27px;font-size:11.016px;line-height:11.016px;color:#222;font-weight:normal;transform:scaleX(0.935);transform-origin:0 0;">1</div>
<div class="b" style="left:26.70px;top:505.30px;width:1386.40px;height:12.50px;background:#fafafa;border-top:1.5px solid #f0f0f0;border-bottom:1.5px solid #f3f3f3;box-sizing:border-box;"></div>
<div class="b" style="left:28.90px;top:508.90px;width:523.20px;height:6.00px;background:#c1c1c1;border-radius:3px;"></div>
<div class="t" style="left:1205.00px;top:533.79px;font-size:10.053px;line-height:10.053px;color:#333;font-weight:normal;transform:scaleX(0.935);transform-origin:0 0;">Viewing <b>1-3</b> of <b>3</b></div>
<div class="b" style="left:1276.30px;top:527.20px;width:26.70px;height:22.80px;border:1px solid #eceef2;border-radius:2px;box-sizing:border-box;background:#fff;"></div>
<svg class="b" style="left:1285.65px;top:534.10px" width="8" height="9" viewBox="0 0 8 9"><rect x="0.8" y="0.3" width="1.6" height="8.4" fill="#aaa"/><path d="M7 0.3 V8.7 L2.4 4.5 Z" fill="#aaa"/></svg>
<div class="b" style="left:1303.80px;top:527.20px;width:21.20px;height:22.80px;border:1px solid #eceef2;border-radius:2px;box-sizing:border-box;background:#fff;"></div>
<svg class="b" style="left:1311.90px;top:535.60px" width="5" height="6" viewBox="0 0 5 6"><path d="M4.2 0.2 V5.8 L0.8 3 Z" fill="#aaa"/></svg>
<div class="b" style="left:1325.80px;top:527.20px;width:21.70px;height:22.80px;border:1px solid #eceef2;border-radius:2px;box-sizing:border-box;background:#fff;"></div>
<svg class="b" style="left:1334.15px;top:535.60px" width="5" height="6" viewBox="0 0 5 6"><path d="M0.8 0.2 V5.8 L4.2 3 Z" fill="#aaa"/></svg>
<div class="b" style="left:1348.70px;top:527.20px;width:25.80px;height:22.80px;border:1px solid #eceef2;border-radius:2px;box-sizing:border-box;background:#fff;"></div>
<svg class="b" style="left:1357.60px;top:534.10px" width="8" height="9" viewBox="0 0 8 9"><rect x="5.6" y="0.3" width="1.6" height="8.4" fill="#aaa"/><path d="M1 0.3 V8.7 L5.6 4.5 Z" fill="#aaa"/></svg>
<div class="b" style="left:1379.50px;top:527.20px;width:33.50px;height:22.80px;border:1px solid #cfd6e0;border-radius:2px;box-sizing:border-box;background:#fff;"></div>
<div class="t" style="left:1386.70px;top:533.79px;font-size:10.053px;line-height:10.053px;color:#333;font-weight:normal;transform:scaleX(0.935);transform-origin:0 0;">25</div>
<svg class="b" style="left:1402.00px;top:535.60px" width="9" height="6" viewBox="0 0 9 6"><path d="M1.1 1.1 L4.5 4.5 L7.9 1.1" fill="none" stroke="#333" stroke-width="1.6"/></svg>
</body></html>
